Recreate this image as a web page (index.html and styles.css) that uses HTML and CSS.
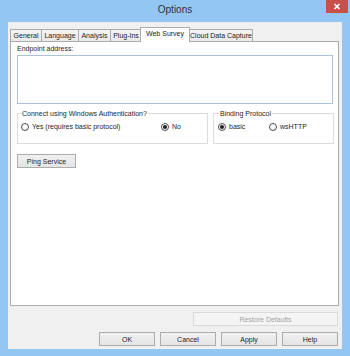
FILE: index.html
```html
<!DOCTYPE html>
<html lang="en">
<head>
    <meta charset="UTF-8">
    <title>Options</title>
    <link rel="stylesheet" href="styles.css">
</head>
<body>
    <div class="window">
        <div class="titlebar">
            <span></span>
            <span class="title">Options</span>
            <span class="close">
                <svg width="8" height="7" viewBox="0 0 8 7"><path d="M1.5 1 L6.5 6 M6.5 1 L1.5 6" stroke="#fff" stroke-width="1.6"/></svg>
            </span>
        </div>
        <div class="client">
            <div class="tabs">
                <div class="tab" style="width:32px">General</div>
                <div class="tab" style="width:38px">Language</div>
                <div class="tab" style="width:33px">Analysis</div>
                <div class="tab" style="width:32px">Plug-Ins</div>
                <div class="tab active" style="width:50px">Web Survey</div>
                <div class="tab" style="width:64px">Cloud Data Capture</div>
            </div>
            <div class="panel">
                <div class="label">Endpoint address:</div>
                <div class="textbox"></div>
                <div class="groups">
                    <div class="group auth">
                        <span class="group-title">Connect using Windows Authentication?</span>
                        <div class="radios">
                            <div class="option" style="width:140px"><span class="radio"></span>Yes (requires basic protocol)</div>
                            <div class="option"><span class="radio checked"></span>No</div>
                        </div>
                    </div>
                    <div class="group binding">
                        <span class="group-title">Binding Protocol</span>
                        <div class="radios">
                            <div class="option" style="width:51px"><span class="radio checked"></span>basic</div>
                            <div class="option"><span class="radio"></span>wsHTTP</div>
                        </div>
                    </div>
                </div>
                <button class="btn ping">Ping Service</button>
            </div>
            <div class="restore-row">
                <button class="btn restore" disabled>Restore Defaults</button>
            </div>
            <div class="button-row">
                <button class="btn">OK</button>
                <button class="btn">Cancel</button>
                <button class="btn">Apply</button>
                <button class="btn">Help</button>
            </div>
        </div>
    </div>
</body>
</html>
```

FILE: styles.css
```css
body {
    margin: 0;
    padding: 0;
    font-family: "Liberation Sans", Arial, sans-serif;
    font-size: 7px;
    color: #1e1e1e;
}

.window {
    width: 350px;
    height: 356px;
    background-color: #93c6f3;
    display: flex;
    flex-direction: column;
}

.titlebar {
    height: 22px;
    display: grid;
    grid-template-columns: 1fr auto 1fr;
}

.title {
    font-size: 10px;
    color: #333;
    line-height: 20px;
}

.close {
    justify-self: end;
    margin-right: 2px;
    width: 22px;
    height: 13px;
    background-color: #c7504a;
    display: flex;
    align-items: center;
    justify-content: center;
}

.client {
    flex: 1;
    margin: 0 8px 7px 8px;
    background-color: #f0f0f0;
    padding: 5px 3px 3px 2px;
    display: flex;
    flex-direction: column;
}

.tabs {
    height: 14px;
    display: flex;
    align-items: flex-end;
}

.tab {
    box-sizing: border-box;
    height: 12px;
    line-height: 11px;
    text-align: center;
    white-space: nowrap;
    border: 1px solid #acacac;
    border-bottom: none;
    margin-right: -1px;
    background: linear-gradient(#f4f4f4, #e8e8e8);
}

.tab.active {
    height: 15px;
    margin-bottom: -1px;
    margin-left: -1px;
    background: #fff;
    position: relative;
    z-index: 1;
    line-height: 12px;
    padding-bottom: 2px;
}

.panel {
    box-sizing: border-box;
    height: 265px;
    border: 1px solid #acacac;
    background-color: #fff;
    padding: 3px 5px 0 6px;
    display: flex;
    flex-direction: column;
    align-items: flex-start;
}

.label {
    line-height: 8px;
}

.textbox {
    box-sizing: border-box;
    margin-top: 2px;
    width: 316px;
    height: 49px;
    border: 1px solid #abc1dc;
    background: #fff;
}

.groups {
    margin-top: 9px;
    display: flex;
    gap: 5px;
}

.group {
    box-sizing: border-box;
    height: 31px;
    border: 1px solid #dcdcdc;
    display: flex;
    flex-direction: column;
    align-items: flex-start;
}

.group.auth {
    width: 191px;
    padding-left: 3px;
}

.group.binding {
    width: 121px;
    padding-left: 4px;
}

.group-title {
    margin-top: -5px;
    margin-left: 1px;
    padding: 0 1px;
    background: #fff;
    line-height: 9px;
}

.auth .group-title {
    margin-left: 0;
}

.radios {
    margin-top: 4px;
    display: flex;
    line-height: 9px;
}

.option {
    display: flex;
    align-items: center;
    white-space: nowrap;
}

.radio {
    box-sizing: border-box;
    width: 8px;
    height: 8px;
    border: 1px solid #4a4a4a;
    border-radius: 50%;
    background: #fff;
    margin-right: 3px;
    display: flex;
    align-items: center;
    justify-content: center;
}

.radio.checked::after {
    content: "";
    width: 4px;
    height: 4px;
    border-radius: 50%;
    background: #1e1e1e;
}

.btn {
    box-sizing: border-box;
    font-family: "Liberation Sans", Arial, sans-serif;
    font-size: 7px;
    color: #1e1e1e;
    height: 14px;
    width: 56px;
    padding: 0;
    border: 1px solid #acacac;
    border-radius: 0;
    background: linear-gradient(#f0f0f0, #e5e5e5);
}

.btn.ping {
    margin-top: 10px;
    width: 59px;
}

.restore-row {
    margin-top: 6px;
    display: flex;
    justify-content: flex-end;
    padding-right: 1px;
}

.btn.restore {
    width: 145px;
    color: #a3a3a3;
    border-color: #d9d9d9;
    background: #f4f4f4;
}

.button-row {
    margin-top: 6px;
    display: flex;
    justify-content: flex-end;
    gap: 5px;
    padding-right: 1px;
}
```
